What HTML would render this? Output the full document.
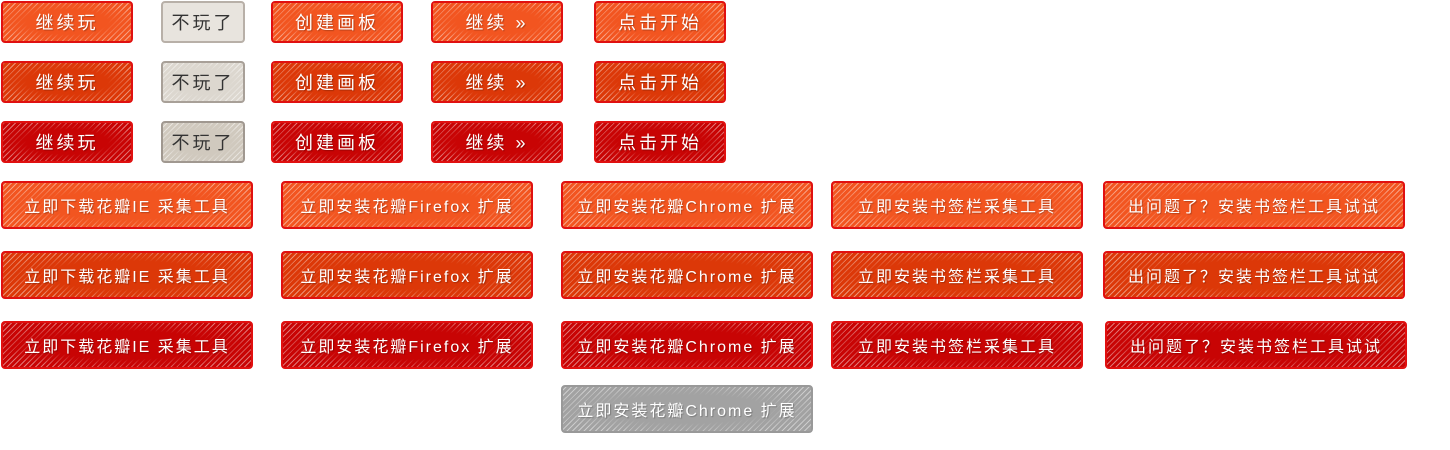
<!DOCTYPE html>
<html><head><meta charset="utf-8"><style>
body{margin:0;width:1450px;height:450px;background:#fff;position:relative;overflow:hidden;font-family:"Liberation Sans","WenQuanYi Zen Hei","Noto Sans CJK SC",sans-serif}
.b{position:absolute;box-sizing:border-box;border:2px solid #e01010;border-radius:4px;color:#fff;display:flex;align-items:center;justify-content:center;white-space:nowrap;text-shadow:1px 1px 1px rgba(0,0,0,.25)}
.s{height:42px;font-size:18px;letter-spacing:3px}
.l{height:48px;font-size:16px;letter-spacing:2px}
.c1{background:radial-gradient(ellipse at center,#f25520 45%,rgba(242,85,32,0) 80%),repeating-linear-gradient(-45deg,rgba(255,255,255,.45) 0 1px,rgba(255,255,255,0) 1px 4px),#f25520}
.c2{background:radial-gradient(ellipse at center,#dc3808 45%,rgba(220,56,8,0) 80%),repeating-linear-gradient(-45deg,rgba(255,255,255,.45) 0 1px,rgba(255,255,255,0) 1px 4px),#dc3808}
.c3{background:radial-gradient(ellipse at center,#c80404 45%,rgba(200,4,4,0) 80%),repeating-linear-gradient(-45deg,rgba(255,255,255,.45) 0 1px,rgba(255,255,255,0) 1px 4px),#c80404}
.g1,.g2,.g3{color:#333;text-shadow:none;border-color:#b8b0a8}
.g1{background:#e8e4de}
.g2{background:radial-gradient(ellipse at center,#dcd7cf 45%,rgba(220,215,207,0) 80%),repeating-linear-gradient(-45deg,rgba(255,255,255,.5) 0 1px,rgba(255,255,255,0) 1px 4px),#dcd7cf;border-color:#a8a098}
.g3{background:radial-gradient(ellipse at center,#d0c9be 45%,rgba(208,201,190,0) 80%),repeating-linear-gradient(-45deg,rgba(255,255,255,.5) 0 1px,rgba(255,255,255,0) 1px 4px),#d0c9be;border-color:#a09890}
.gy{background:radial-gradient(ellipse at center,#a2a2a2 45%,rgba(162,162,162,0) 80%),repeating-linear-gradient(-45deg,rgba(255,255,255,.45) 0 1px,rgba(255,255,255,0) 1px 4px),#a2a2a2;border-color:#999}
</style></head><body>
<div class="b s c1" style="left:1px;top:1px;width:132px">继续玩</div>
<div class="b s g1" style="left:161px;top:1px;width:84px">不玩了</div>
<div class="b s c1" style="left:271px;top:1px;width:132px">创建画板</div>
<div class="b s c1" style="left:431px;top:1px;width:132px">继续 »</div>
<div class="b s c1" style="left:594px;top:1px;width:132px">点击开始</div>

<div class="b s c2" style="left:1px;top:61px;width:132px">继续玩</div>
<div class="b s g2" style="left:161px;top:61px;width:84px">不玩了</div>
<div class="b s c2" style="left:271px;top:61px;width:132px">创建画板</div>
<div class="b s c2" style="left:431px;top:61px;width:132px">继续 »</div>
<div class="b s c2" style="left:594px;top:61px;width:132px">点击开始</div>

<div class="b s c3" style="left:1px;top:121px;width:132px">继续玩</div>
<div class="b s g3" style="left:161px;top:121px;width:84px">不玩了</div>
<div class="b s c3" style="left:271px;top:121px;width:132px">创建画板</div>
<div class="b s c3" style="left:431px;top:121px;width:132px">继续 »</div>
<div class="b s c3" style="left:594px;top:121px;width:132px">点击开始</div>

<div class="b l c1" style="left:1px;top:181px;width:252px">立即下载花瓣IE 采集工具</div>
<div class="b l c1" style="left:281px;top:181px;width:252px">立即安装花瓣Firefox 扩展</div>
<div class="b l c1" style="left:561px;top:181px;width:252px">立即安装花瓣Chrome 扩展</div>
<div class="b l c1" style="left:831px;top:181px;width:252px">立即安装书签栏采集工具</div>
<div class="b l c1" style="left:1103px;top:181px;width:302px">出问题了？安装书签栏工具试试</div>

<div class="b l c2" style="left:1px;top:251px;width:252px">立即下载花瓣IE 采集工具</div>
<div class="b l c2" style="left:281px;top:251px;width:252px">立即安装花瓣Firefox 扩展</div>
<div class="b l c2" style="left:561px;top:251px;width:252px">立即安装花瓣Chrome 扩展</div>
<div class="b l c2" style="left:831px;top:251px;width:252px">立即安装书签栏采集工具</div>
<div class="b l c2" style="left:1103px;top:251px;width:302px">出问题了？安装书签栏工具试试</div>

<div class="b l c3" style="left:1px;top:321px;width:252px">立即下载花瓣IE 采集工具</div>
<div class="b l c3" style="left:281px;top:321px;width:252px">立即安装花瓣Firefox 扩展</div>
<div class="b l c3" style="left:561px;top:321px;width:252px">立即安装花瓣Chrome 扩展</div>
<div class="b l c3" style="left:831px;top:321px;width:252px">立即安装书签栏采集工具</div>
<div class="b l c3" style="left:1105px;top:321px;width:302px">出问题了？安装书签栏工具试试</div>

<div class="b l gy" style="left:561px;top:385px;width:252px">立即安装花瓣Chrome 扩展</div>
</body></html>
